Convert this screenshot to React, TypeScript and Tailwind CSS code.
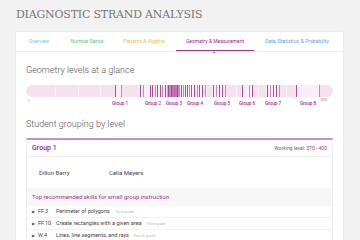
const tabs = [
  { label: 'Overview', width: 'w-[46px]', color: 'text-[#7cc5cf]' },
  { label: 'Number Sense', width: 'w-[50px]', color: 'text-[#5acb7c]' },
  { label: 'Patterns & Algebra', width: 'w-[64px]', color: 'text-[#efc142]' },
  { label: 'Geometry & Measurement', width: 'w-[78px]', color: 'text-[#9b2a8c]', active: true },
  { label: 'Data, Statistics, & Probability', width: 'w-[86px]', color: 'text-[#5b9de6]' },
];

// x positions are page pixels; the bar starts at 26
const groups = [
  { label: 'Group 1', cx: 120, from: 115, to: 122, ticks: [115, 121] },
  { label: 'Group 2', cx: 153, from: 140, to: 166, ticks: [140, 143, 150, 152, 155, 157, 160, 162, 165] },
  { label: 'Group 3', cx: 174, from: 167, to: 180, ticks: [168, 169.5, 171, 172.5, 174, 175.5, 177, 178.5], dark: true },
  { label: 'Group 4', cx: 195, from: 180, to: 207, ticks: [181, 183, 185, 187, 189, 191, 194, 197, 199, 202, 205] },
  { label: 'Group 5', cx: 222, from: 212, to: 226, ticks: [213, 216, 219, 222, 225] },
  { label: 'Group 6', cx: 247, from: 241, to: 253, ticks: [242, 249, 252] },
  { label: 'Group 7', cx: 273, from: 266, to: 280, ticks: [267, 270, 273, 276, 279] },
  { label: 'Group 8', cx: 308, from: 296, to: 320, ticks: [296, 319] },
];

const dividers = [55, 78, 100, 236, 258, 286];

const skills = [
  { code: 'FF.3', name: 'Perimeter of polygons', grade: 'Third grade' },
  { code: 'FF.10', name: 'Create rectangles with a given area', grade: 'Third grade' },
  { code: 'W.4', name: 'Lines, line segments, and rays', grade: 'Fourth grade' },
];

function LevelBar() {
  const x0 = 26;
  return (
    <svg width="307" height="24" viewBox="0 0 307 24" className="block">
      <defs>
        <clipPath id="pill">
          <rect x="0" y="0" width="307" height="12" rx="6" />
        </clipPath>
      </defs>
      <g clipPath="url(#pill)">
        <rect x="0" y="0" width="307" height="12" fill="#f4e2ef" />
        {dividers.map((d) => (
          <rect key={d} x={d - x0} y="0" width="0.8" height="12" fill="#fbf3f9" />
        ))}
        {groups.map((g) => (
          <rect
            key={g.label}
            x={g.from - x0}
            y="0"
            width={g.to - g.from}
            height="12"
            fill={g.dark ? '#d9a6cf' : '#f9eef6'}
          />
        ))}
        {groups.map((g) =>
          g.ticks.map((t, i) => (
            <rect
              key={g.label + t}
              x={t - x0}
              y="0"
              width="1"
              height="12"
              fill="#a2318f"
              opacity={i % 3 === 1 ? 0.55 : 0.85}
            />
          ))
        )}
      </g>
      <text x="2" y="16.5" fontSize="3.5" fill="#aaa" fontFamily="Roboto, sans-serif">
        0
      </text>
      <rect x="293" y="12.5" width="9" height="4" rx="1" fill="#f1f1f1" />
      <text x="297.5" y="15.6" fontSize="3" fill="#aaa" textAnchor="middle" fontFamily="Roboto, sans-serif">
        1000
      </text>
      {groups.map((g) => (
        <text
          key={g.label}
          x={g.cx - x0}
          y="19.8"
          fontSize="4.6"
          fontWeight="500"
          fill="#a2318f"
          textAnchor="middle"
          fontFamily="Roboto, sans-serif"
        >
          {g.label}
        </text>
      ))}
    </svg>
  );
}

export default function App() {
  return (
    <div className="min-h-screen bg-[#f2f2f2] font-['Roboto',sans-serif]">
      <div className="w-[360px] px-[16px] pt-[8px]">
        <h1 className="mb-[11px] font-['DejaVu_Serif',serif] text-[11px] font-normal leading-[13px] tracking-[-0.2px] text-[#777]">
          DIAGNOSTIC STRAND ANALYSIS
        </h1>

        <div className="w-[327px] bg-white pb-4 shadow-[0_0_1px_rgba(0,0,0,0.18)]">
          <div className="flex h-[20px] border-b border-[#eeeeee]">
            {tabs.map((t) => (
              <div
                key={t.label}
                className={`relative flex h-[19px] items-center justify-center ${t.width} ${t.color} text-[5px] leading-none`}
              >
                {t.label}
                {t.active && (
                  <>
                    <span className="absolute bottom-[0px] left-0 right-0 h-[1.5px] bg-[#a2318f]" />
                    <span className="absolute -bottom-[2.5px] left-[37px] h-0 w-0 border-x-[1.8px] border-t-[2px] border-x-transparent border-t-[#a2318f]" />
                  </>
                )}
              </div>
            ))}
          </div>

          <div className="px-[10px]">
            <h2 className="pt-[13px] text-[9px] font-light leading-[11px] text-[#555]">
              Geometry levels at a glance
            </h2>
            <div className="mt-[9px]">
              <LevelBar />
            </div>

            <h2 className="mt-[10px] text-[9px] font-light leading-[11px] text-[#555]">
              Student grouping by level
            </h2>

            <div className="mt-[8px] border-x border-b border-t-2 border-x-[#eeeeee] border-b-[#eeeeee] border-t-[#cf8dc5]">
              <div className="flex h-[17px] items-center justify-between border-b border-[#f0f0f0] px-[5px]">
                <span className="text-[7px] font-medium leading-none text-[#9b2a8c]">Group 1</span>
                <span className="text-[5px] leading-none text-[#666]">
                  Working level: <span className="text-[#a2318f]">370 - 400</span>
                </span>
              </div>

              <div className="flex h-[31px] items-center pl-[12px] text-[6px] leading-none text-[#444]">
                <span className="w-[70px]">Dillon Barry</span>
                <span>Celia Meyers</span>
              </div>

              <div className="flex h-[18px] items-center bg-[#f7f7f7] pl-[5px] text-[6px] leading-none text-[#a2318f]">
                Top recommended skills for small group instruction
              </div>

              {skills.map((s) => (
                <div
                  key={s.code}
                  className="flex h-[12px] items-center border-b border-[#f2f2f2] pl-[5px] text-[5.5px] leading-none text-[#444]"
                >
                  <span className="w-[6px] text-[4px] text-[#555]">▶</span>
                  <span className="w-[18px]">{s.code}</span>
                  <span>{s.name}</span>
                  <span className="ml-[5px] text-[3.8px] text-[#bbb]">{s.grade}</span>
                </div>
              ))}
            </div>
          </div>
        </div>
      </div>
    </div>
  );
}
